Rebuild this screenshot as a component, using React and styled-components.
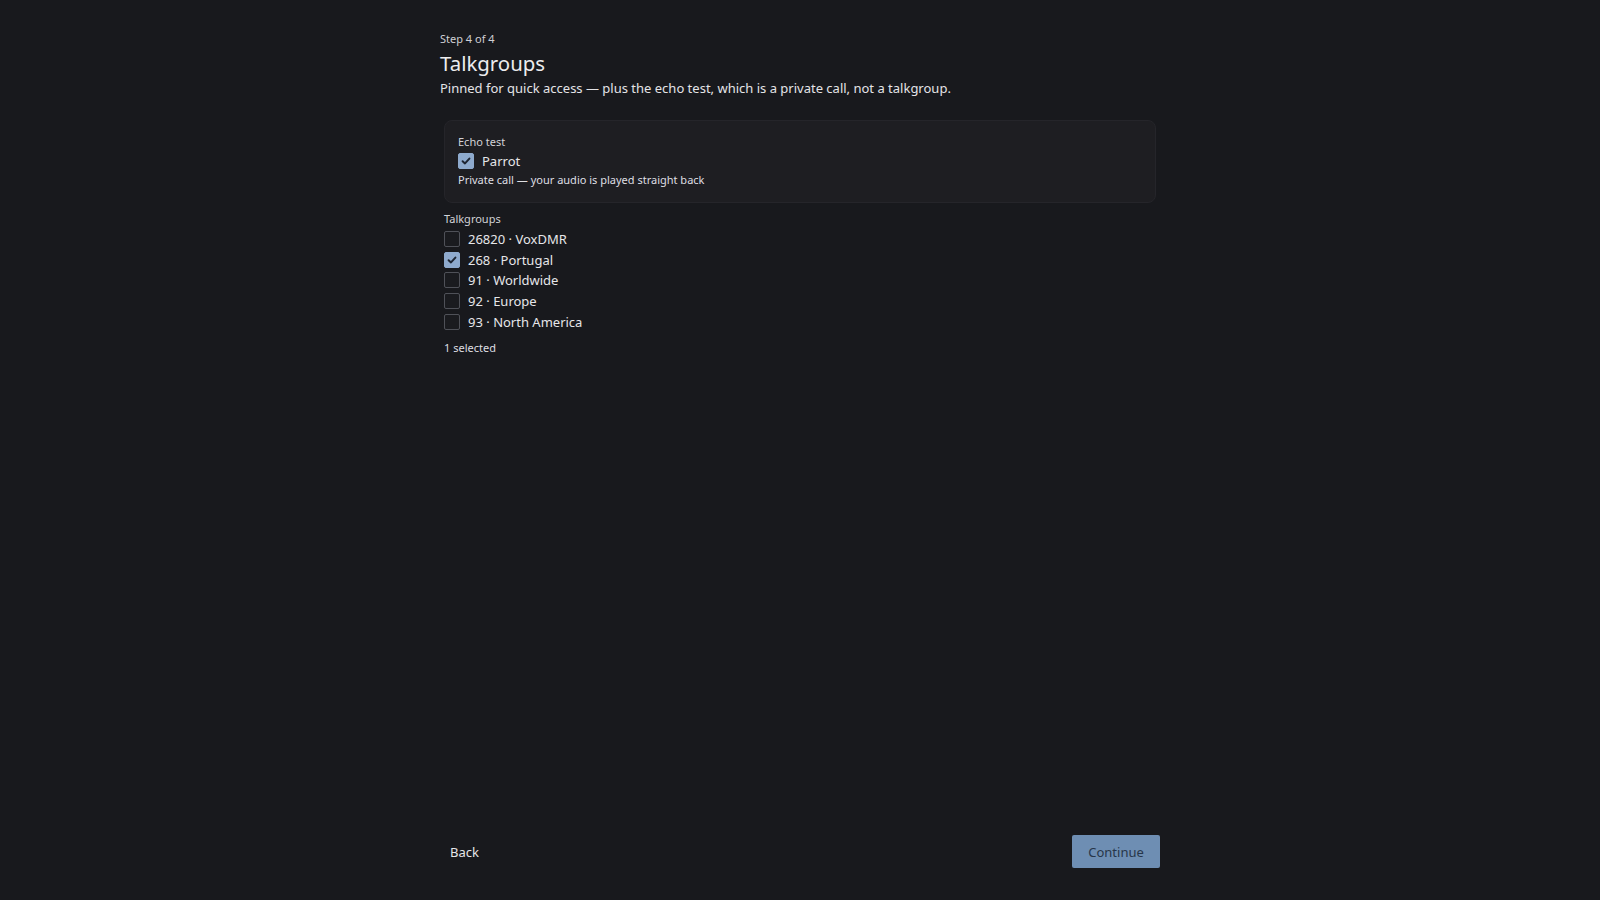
import React, { useState } from "react";
import styled, { createGlobalStyle } from "styled-components";

const GlobalStyle = createGlobalStyle`
  html, body {
    margin: 0;
    padding: 0;
    background: #18191d;
  }
  body {
    font-family: "Noto Sans", "Open Sans", sans-serif;
    color: #e4e4e7;
  }
  * {
    box-sizing: border-box;
  }
`;

const TALKGROUPS = [
  { id: 26820, name: "VoxDMR" },
  { id: 268, name: "Portugal" },
  { id: 91, name: "Worldwide" },
  { id: 92, name: "Europe" },
  { id: 93, name: "North America" },
];

//small check box drawn by hand
const Check = ({ checked, onClick }) => (
  <Box checked={checked} onClick={onClick}>
    {checked && (
      <svg width="10" height="10" viewBox="0 0 10 10">
        <path
          d="M1.6 5.2 L4 7.4 L8.4 2.6"
          fill="none"
          stroke="#1d2532"
          strokeWidth="2"
          strokeLinecap="round"
          strokeLinejoin="round"
        />
      </svg>
    )}
  </Box>
);

const App = () => {
  let [parrot, setParrot] = useState(true);
  let [picked, setPicked] = useState([268]);

  const toggle = (id) => {
    setPicked(
      picked.includes(id) ? picked.filter((p) => p !== id) : [...picked, id]
    );
  };

  return (
    <Page>
      <GlobalStyle />
      <Column>
        <Step>Step 4 of 4</Step>
        <Title>Talkgroups</Title>
        <Lead>
          Pinned for quick access — plus the echo test, which is a private
          call, not a talkgroup.
        </Lead>

        <Section>
          <Card>
            <Label>Echo test</Label>
            <Row>
              <Check checked={parrot} onClick={() => setParrot(!parrot)} />
              <span>Parrot</span>
            </Row>
            <Hint>Private call — your audio is played straight back</Hint>
          </Card>

          <Group>
            <Label>Talkgroups</Label>
            <List>
              {TALKGROUPS.map((tg) => (
                <Row key={tg.id} tall>
                  <Check
                    checked={picked.includes(tg.id)}
                    onClick={() => toggle(tg.id)}
                  />
                  <span>
                    {tg.id} · {tg.name}
                  </span>
                </Row>
              ))}
            </List>
            <Count>{picked.length} selected</Count>
          </Group>
        </Section>

        <Footer>
          <GhostButton>Back</GhostButton>
          <PrimaryButton>Continue</PrimaryButton>
        </Footer>
      </Column>
    </Page>
  );
};

export default App;

const Page = styled.div`
  min-height: 100vh;
  display: flex;
  justify-content: center;
`;

const Column = styled.div`
  width: 720px;
  min-height: 100vh;
  display: flex;
  flex-direction: column;
  padding: 31px 0 32px 0;
`;

const Step = styled.div`
  font-size: 11px;
  line-height: 15px;
  color: #cfcfd4;
`;

const Title = styled.h1`
  margin: 3px 0 0 0;
  font-size: 20.4px;
  line-height: 28px;
  font-weight: 400;
  color: #ececee;
`;

const Lead = styled.p`
  margin: 1px 0 0 0;
  font-size: 13px;
  line-height: 20px;
  color: #e4e4e7;
`;

const Section = styled.div`
  padding: 0 4px;
  margin-top: 22px;
`;

const Card = styled.div`
  display: flex;
  flex-direction: column;
  gap: 1px;
  background: #1e1e22;
  border: 1px solid #25252a;
  border-radius: 8px;
  padding: 13px 13px 14px 13px;
`;

const Label = styled.div`
  font-size: 11px;
  line-height: 16px;
  color: #d2d2d7;
`;

const Row = styled.label`
  display: flex;
  align-items: center;
  gap: 8px;
  height: ${(p) => (p.tall ? "20.6px" : "20px")};
  font-size: 13px;
  color: #e6e6e9;
  cursor: pointer;
`;

const Box = styled.span`
  width: 16px;
  height: 16px;
  flex: none;
  display: flex;
  align-items: center;
  justify-content: center;
  border-radius: 2px;
  border: 1px solid ${(p) => (p.checked ? "#8eaacd" : "#4f5158")};
  background: ${(p) => (p.checked ? "#8eaacd" : "#1a1b1f")};
`;

const Hint = styled.div`
  font-size: 11px;
  line-height: 16px;
  color: #dedee2;
`;

const Group = styled.div`
  margin-top: 8px;
`;

const List = styled.div`
  margin-top: 2px;
  display: flex;
  flex-direction: column;
`;

const Count = styled.div`
  margin-top: 8px;
  font-size: 11px;
  line-height: 16px;
  color: #dedee2;
`;

const Footer = styled.div`
  margin-top: auto;
  display: flex;
  justify-content: space-between;
  align-items: center;
`;

const GhostButton = styled.button`
  font-family: inherit;
  font-size: 13px;
  height: 33px;
  padding: 0 10px;
  background: transparent;
  border: none;
  color: #e6e6e9;
  cursor: pointer;
`;

const PrimaryButton = styled.button`
  font-family: inherit;
  font-size: 13px;
  height: 33px;
  width: 88px;
  border: none;
  border-radius: 2px;
  background: #6e8eb3;
  color: #27364a;
  cursor: pointer;
`;
